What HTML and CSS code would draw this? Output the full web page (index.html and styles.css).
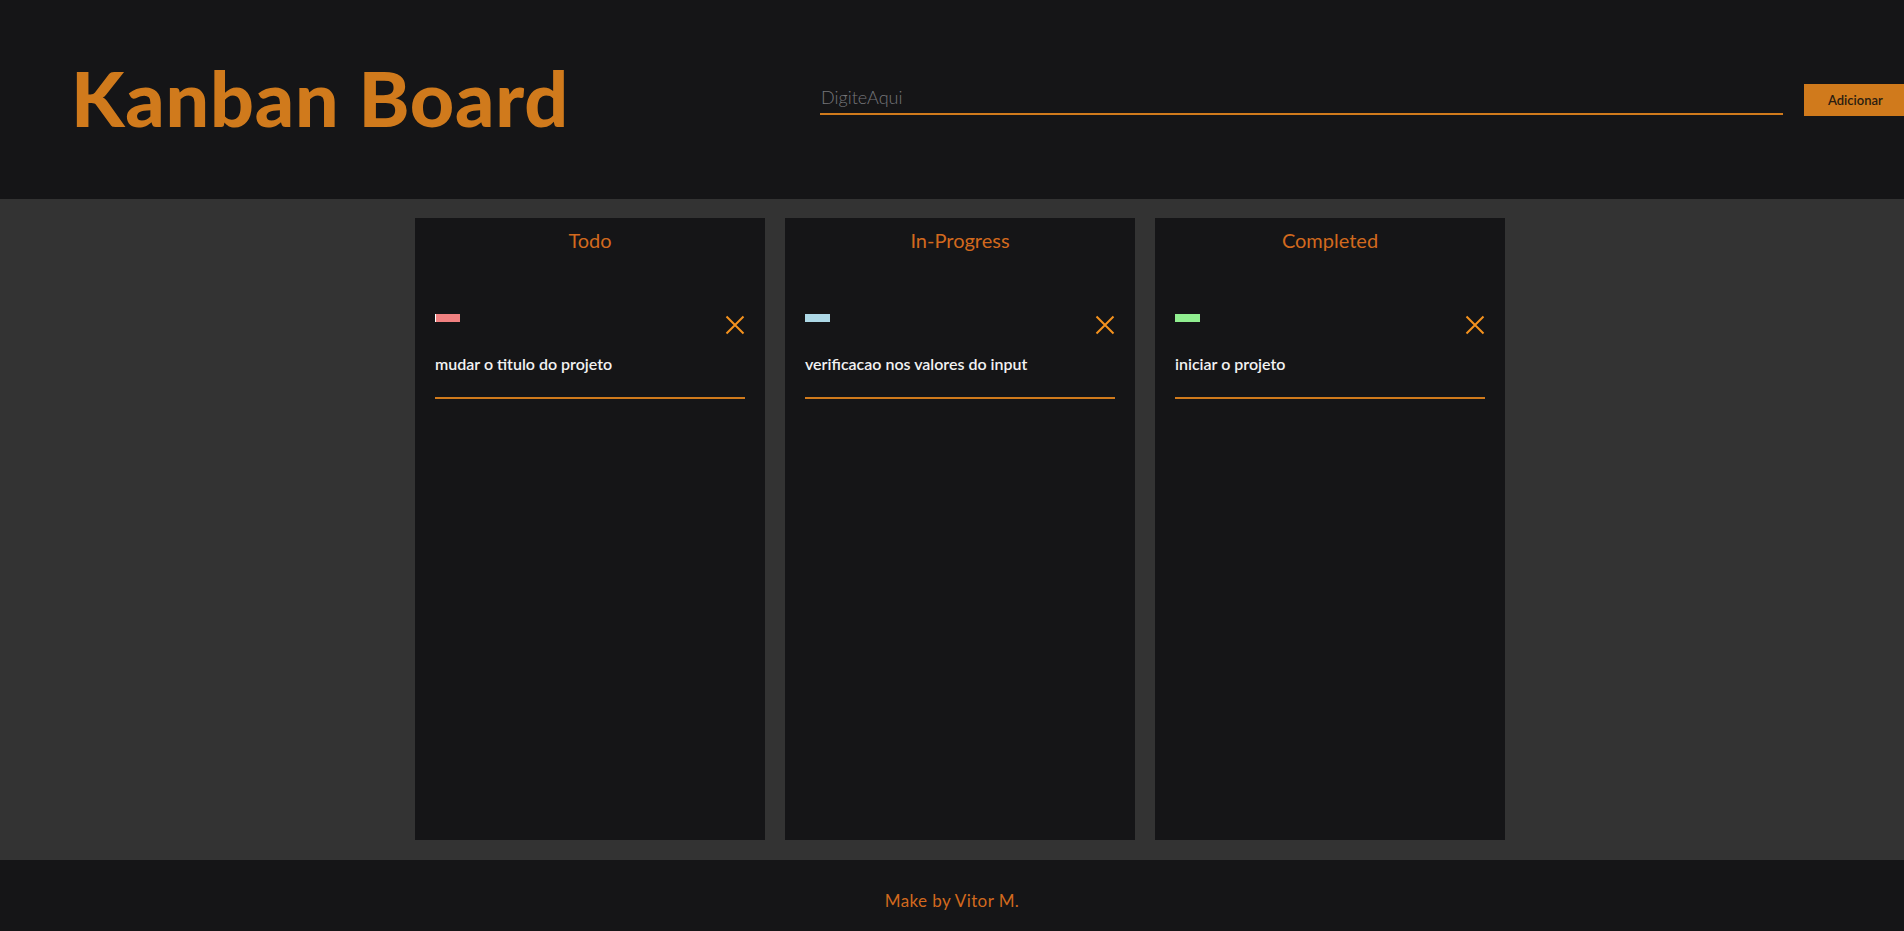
FILE: index.html
```html
<!DOCTYPE html>
<html lang="pt">
<head>
<meta charset="utf-8">
<title>Kanban Board</title>
<link rel="stylesheet" href="styles.css">
</head>
<body>
<header class="topbar">
  <h1 class="brand">Kanban Board</h1>
  <form class="add-form">
    <input class="add-input" type="text" placeholder="DigiteAqui">
    <button class="add-btn" type="button">Adicionar</button>
  </form>
</header>
<main class="board">
  <div class="columns">
    <section class="column">
      <h2 class="column-title">Todo</h2>
      <div class="card">
        <div class="card-top">
          <span class="tag tag-todo"></span>
          <svg class="close" width="20" height="20" viewBox="0 0 20 20"><path d="M1.5 1.5L18.5 18.5M18.5 1.5L1.5 18.5" stroke="currentColor" stroke-width="2" fill="none"/></svg>
        </div>
        <p class="card-text">mudar o titulo do projeto</p>
      </div>
    </section>
    <section class="column">
      <h2 class="column-title">In-Progress</h2>
      <div class="card">
        <div class="card-top">
          <span class="tag tag-progress"></span>
          <svg class="close" width="20" height="20" viewBox="0 0 20 20"><path d="M1.5 1.5L18.5 18.5M18.5 1.5L1.5 18.5" stroke="currentColor" stroke-width="2" fill="none"/></svg>
        </div>
        <p class="card-text">verificacao nos valores do input</p>
      </div>
    </section>
    <section class="column">
      <h2 class="column-title">Completed</h2>
      <div class="card">
        <div class="card-top">
          <span class="tag tag-done"></span>
          <svg class="close" width="20" height="20" viewBox="0 0 20 20"><path d="M1.5 1.5L18.5 18.5M18.5 1.5L1.5 18.5" stroke="currentColor" stroke-width="2" fill="none"/></svg>
        </div>
        <p class="card-text">iniciar o projeto</p>
      </div>
    </section>
  </div>
</main>
<footer class="footer">Make by Vitor M.</footer>
</body>
</html>
```

FILE: styles.css
```css
html, body {
  margin: 0;
  padding: 0;
  overflow-x: hidden;
}
body {
  font-family: Lato, "Open Sans", sans-serif;
  background: #151517;
}
.topbar {
  height: 199px;
  display: flex;
  align-items: center;
  padding-left: 71px;
  background: #151517;
  overflow: hidden;
  box-sizing: border-box;
}
.brand {
  flex: 0 0 749px;
  margin: 0;
  font-size: 77px;
  font-weight: 900;
  letter-spacing: 0.8px;
  color: #d07a1c;
  line-height: 1;
  padding-bottom: 4px;
}
.add-form {
  display: flex;
  align-items: center;
  gap: 21px;
  flex: 0 0 auto;
}
.add-input {
  width: 963px;
  box-sizing: border-box;
  background: transparent;
  border: none;
  border-bottom: 2px solid #d07a1c;
  color: #ddd;
  font-family: Lato, sans-serif;
  font-size: 18px;
  font-weight: 300;
  padding: 1px 1px 5px;
  outline: none;
}
.add-input::placeholder {
  color: #76767a;
}
.add-btn {
  width: 106px;
  height: 32px;
  flex: 0 0 106px;
  border: none;
  background: #d07a1c;
  color: #2a1c10;
  font-family: Lato, sans-serif;
  font-size: 13px;
  font-weight: 600;
  padding: 0 0 0 24px;
  text-align: left;
}
.board {
  background: #333333;
  padding: 19px 0 20px;
}
.columns {
  display: flex;
  gap: 20px;
  margin-left: 415px;
}
.column {
  width: 350px;
  height: 622px;
  box-sizing: border-box;
  background: #151517;
  padding: 10px 20px;
}
.column-title {
  margin: 0;
  text-align: center;
  font-size: 20px;
  font-weight: 400;
  line-height: 24px;
  color: #d2691e;
}
.card {
  margin-top: 62px;
  border-bottom: 2px solid #d07a1c;
  padding-bottom: 22px;
}
.card-top {
  display: flex;
  justify-content: space-between;
  align-items: flex-start;
  height: 20px;
}
.tag {
  display: block;
  width: 25px;
  height: 8px;
}
.tag-todo { background: #f08080; border-left: 1px solid #fff; width: 24px; }
.tag-progress { background: #add8e6; }
.tag-done { background: #90ee90; }
.close {
  color: #f5921e;
  display: block;
  margin-top: 1px;
}
.card-text {
  margin: 19px 0 0;
  font-size: 16px;
  font-weight: 600;
  line-height: 22px;
  color: #f2f2f2;
}
.footer {
  background: #151517;
  text-align: center;
  color: #d2691e;
  font-size: 17px;
  letter-spacing: 0.4px;
  line-height: 24px;
  padding: 29px 0 18px;
}
```
